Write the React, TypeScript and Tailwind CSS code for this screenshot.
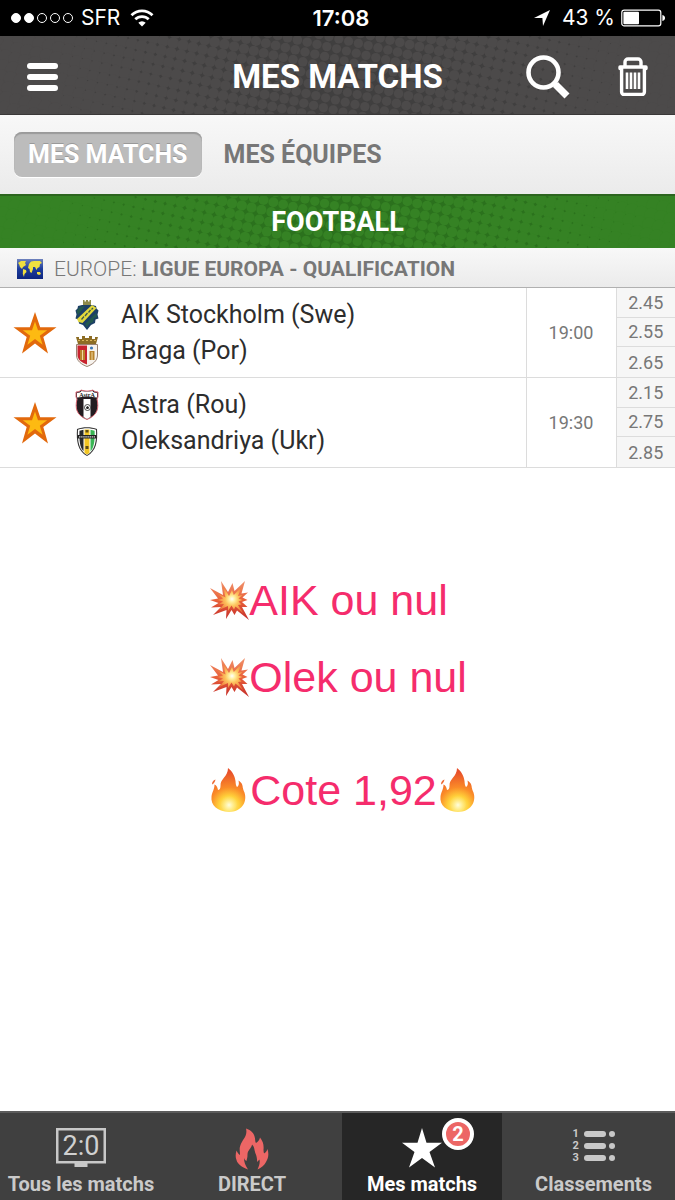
import React from 'react';

interface Team {
  name: string;
  crest: React.ReactNode;
}

interface Match {
  id: number;
  home: Team;
  away: Team;
  time: string;
  odds: string[];
}

// Dots shrink towards the middle so that the dark ground shows between them
const dots: { x: number; y: number; r: number }[] = [];
for (let row = -18; row < 30; row++) {
  for (let col = -4; col < 74; col++) {
    const x = col * 9.8 + row * -2.2;
    const y = row * 9.8 + col * 2.2;
    if (y < -6 || y > 86) continue;
    const edge = Math.min(1, Math.abs(x - 345) / 300);
    dots.push({ x, y, r: 4.6 + Math.pow(edge, 1.4) * 2.6 });
  }
}

const Halftone = ({ ground, dot }: { ground: string; dot: string }) => (
  <svg
    className="absolute inset-0 h-full w-full"
    viewBox="0 0 675 80"
    preserveAspectRatio="xMidYMid slice"
    aria-hidden="true"
  >
    <rect width="675" height="80" fill={ground} />
    {dots.map((d, i) => (
      <circle key={i} cx={d.x} cy={d.y} r={d.r} fill={dot} />
    ))}
  </svg>
);

const WifiIcon = () => (
  <svg className="h-[18px] w-6" viewBox="0 0 24 18" fill="none" stroke="#fff" strokeWidth="2.8">
    <path d="M1.5 6.2a15 15 0 0 1 21 0" />
    <path d="M5.3 10.3a9.6 9.6 0 0 1 13.4 0" />
    <path d="M12 17.5l-3.7-3.8a5.3 5.3 0 0 1 7.4 0z" fill="#fff" stroke="none" />
  </svg>
);

const LocationIcon = () => (
  <svg className="h-4 w-4" viewBox="0 0 16 16" fill="#fff">
    <path d="M16 0L9 16 8.4 8H0z" />
  </svg>
);

const BatteryIcon = () => (
  <svg className="h-[18px] w-11" viewBox="0 0 44 18">
    <rect x="0.8" y="1.2" width="39" height="15.6" rx="2.4" fill="none" stroke="#fff" strokeWidth="1.2" />
    <rect x="2.4" y="2.8" width="15.6" height="12.4" rx="1" fill="#fff" />
    <path d="M41.4 6c2 .6 2.6 1.6 2.6 3s-.6 2.4-2.6 3z" fill="#fff" />
  </svg>
);

const SearchIcon = () => (
  <svg className="h-11 w-11" viewBox="0 0 44 44" fill="none" stroke="#fff">
    <circle cx="17.5" cy="17.5" r="15" strokeWidth="4.6" />
    <path d="M27.5 28l3.5 3.5" strokeWidth="5" />
    <path d="M29.5 29.5l11.5 11.5" strokeWidth="7" />
  </svg>
);

const TrashIcon = () => (
  <svg className="h-10 w-[30px]" viewBox="0 0 30 40" fill="none" stroke="#fff">
    <path d="M7 9V5a3 3 0 0 1 3-3h10a3 3 0 0 1 3 3v4" strokeWidth="3.4" />
    <path d="M2 11.5V10h26v1.5" strokeWidth="3.4" strokeLinecap="round" strokeLinejoin="round" />
    <path d="M3.6 11v24a2.4 2.4 0 0 0 2.4 2.4h18a2.4 2.4 0 0 0 2.4-2.4V11" strokeWidth="3.4" />
    <path d="M9 15.5v16.500M13 15.5v16.500M17 15.5v16.500M21 15.5v16.500" strokeWidth="2.6" />
  </svg>
);

const WorldFlag = () => (
  <svg className="h-5 w-[26px]" viewBox="0 0 26 20">
    <defs>
      <linearGradient id="sea" x1="0" y1="0" x2="0" y2="1">
        <stop offset="0" stopColor="#6f83bd" />
        <stop offset="0.5" stopColor="#1c3c9c" />
        <stop offset="1" stopColor="#0c2580" />
      </linearGradient>
    </defs>
    <rect width="26" height="20" fill="url(#sea)" />
    <g fill="#f0e040">
      <path d="M1 4l3-2 5 0-1 2 1 2-3 2-1 2-2-2-1-3z" />
      <path d="M6 10l3 1 .5 2-2 2-.5 3-1.2-3z" />
      <path d="M12 5l2-2.500 3-.5 6 0 2 2-2 1-.5 3-2 1-1 2-1.500-3-2 0 0 2-1.500 4-1.500-1-.5-3-1.500-1z" />
      <path d="M20 13l3 0 1 2-2 1-2-1z" />
    </g>
  </svg>
);

const FavoriteStar = () => (
  <svg className="h-[42px] w-11" viewBox="0 0 44 42">
    <path d="M22 0l5.200 15.200H43.500L30.300 25.100 35 41.500 22 31.500 9 41.500l4.700-16.400L.5 15.200H16.800z" fill="#e2690c" />
    <path d="M22 9.500l3 8.700h9.200l-7.400 5.500 2.800 9L22 27l-7.600 5.700 2.800-9-7.400-5.500H19z" fill="#fdba12" />
  </svg>
);

const AikCrest = () => (
  <svg className="h-8 w-7" viewBox="0 0 28 32">
    <path d="M10 1h1.500v1.500h1.500V1h2v1.500h1.500V1H18v5h-8z" fill="#8d8a4a" />
    <path d="M5 7l4-1h10l4 1 .5 2.500 2 2-1 4 1 4-3 1-.5 3.500-4 2L14 31l-4-5-4-1.500-.5-4-3-1 1-4-1-4 2-2z" fill="#1c3f66" />
    <path d="M7 8l5-1-7 9-1.500-4zM23 14l1 4-3 1-1 4-4 2-2 3-2-3z" fill="#22584e" />
    <path d="M4 20L19 6l4.500 3L9.500 24l-4-1z" fill="#e3d83c" />
    <path d="M8.500 20.500l2.500-3M12 17l2.500-3M15.500 13.500l2-2.500M18.500 10.500l1.500-1.500" stroke="#3b5a4c" strokeWidth="1.300" />
  </svg>
);

const BragaCrest = () => (
  <svg className="h-8 w-7" viewBox="0 0 28 32">
    <path d="M3 2h3v2h3V1h3v2h4V1h3v3h3V2h3l-2 7H5z" fill="#8d6d24" />
    <path d="M5 5.500h18" stroke="#d9b45a" strokeWidth="1.200" strokeDasharray="2 2" />
    <path d="M3.500 9.500h21V20c0 6-5 9.500-10.500 11.500C8.500 29.500 3.500 26 3.500 20z" fill="#f7f3ee" stroke="#9a8372" />
    <path d="M4.500 10.500H14v19C9 27.500 4.500 25 4.500 20z" fill="#c8232e" />
    <path d="M7 15h5v10H7zM16.500 16h5v9h-5z" fill="#b8822b" />
    <path d="M9.500 15v10M19 17v8" stroke="#f1d9a0" />
    <circle cx="18.500" cy="13" r="1.600" fill="#3e78b5" />
  </svg>
);

const AstraCrest = () => (
  <svg className="h-8 w-7" viewBox="0 0 28 32">
    <path d="M3 3c3 0 4-1 5-2 4 1.500 8 1.500 12 0 1 1 2 2 5 2l0 5-1 2c2 9 1 16-10 20.500C3 26 2 19 4 10L3 8z" fill="#231c20" stroke="#dd6b77" />
    <path d="M4 4c2 0 4-1 4.500-2 3.500 1 7.500 1 11 0C20 3 22 4 24 4v4.500c-6-1-14-1-20 0z" fill="#fff" />
    <path d="M10.500 10h7v18l-3.500 2-3.500-2z" fill="#fff" />
    <text x="14" y="8" textAnchor="middle" fontSize="6" fontWeight="700" fontFamily="Liberation Serif, serif" fill="#222">
      AstrA
    </text>
    <circle cx="14.500" cy="18.500" r="3" fill="#fff" stroke="#222" strokeWidth="0.800" />
    <path d="M14.500 17l1.500 1.200-.6 1.800h-1.800l-.6-1.800z" fill="#222" />
  </svg>
);

const OleksandriyaCrest = () => (
  <svg className="h-8 w-7" viewBox="0 0 28 32">
    <path d="M4 4c6-2.500 14-2.500 20 0 .8 12-.5 22-10 27C4.500 26 3.200 16 4 4z" fill="#333" />
    <path d="M5 4.700c5.500-2 12.500-2 18 0 .6 11-.6 20.500-9 25.200C5.600 25.200 4.500 16 5 4.700z" fill="#fff" />
    <path d="M6.500 5.800l4-1v21.500C7 23 6 16 6.500 5.800z" fill="#27292b" />
    <path d="M11.500 4.500h5v23.500l-2.500 1.500-2.500-1.500z" fill="#f3c623" />
    <path d="M17.500 4.800l4.100 1c.4 10-.6 17-4.100 20.500z" fill="#39b655" />
    <path d="M4.500 10h19v3.500h-19z" fill="#222" />
    <path d="M6 11.800h16" stroke="#cfcfcf" strokeWidth="1.200" strokeDasharray="1.500 .6" />
    <path d="M12.500 5h3v2.500h-3zM12.500 21h3v3h-3z" fill="#5c4a16" />
  </svg>
);

const Collision = () => (
  <svg className="h-10 w-10 shrink-0" viewBox="0 0 40 40">
    <defs>
      <linearGradient id="boom" x1="0" y1="0" x2="0" y2="1">
        <stop offset="0" stopColor="#f0926c" />
        <stop offset="0.500" stopColor="#e8603a" />
        <stop offset="1" stopColor="#c42d2a" />
      </linearGradient>
      <radialGradient id="glow" gradientUnits="userSpaceOnUse" cx="23" cy="19" r="15">
        <stop offset="0" stopColor="#fff" />
        <stop offset="0.200" stopColor="#fff0a0" />
        <stop offset="0.450" stopColor="#fdc45e" />
        <stop offset="0.900" stopColor="#f08040" />
      </radialGradient>
    </defs>
    <path
      d="M12 1l7 11L23.500 3l2 8L36 1l-3.500 12.500L39 12.500l-5.500 5L38.500 20l-5.500 2 5.500 5-5.500 0L40 40 28 30.500l-2.500 4.500-3-5L17 39l.5-9L4 35l8-8-10 .5 7.500-4.500L1 20l8-1.500L1 8l13 7z"
      fill="url(#boom)"
    />
    <path
      d="M14 6l6 10L23 10l1.800 5L32.500 7l-3.500 9 4.500-1-4 3.500 4 1.500-4 1.500 3 3-3.500.5L34 33l-7.500-6.500-1.500 3-2.500-4L19 31l0-5L10 30l5-6-6 .5 5-3-6-1.500 6-1.500L7 12.500l9.500 5z"
      fill="url(#glow)"
    />
  </svg>
);

const Fire = () => (
  <svg className="h-11 w-10 shrink-0" viewBox="0 0 40 44">
    <defs>
      <radialGradient id="flame" gradientUnits="userSpaceOnUse" cx="20" cy="38" r="34">
        <stop offset="0" stopColor="#fff6a0" />
        <stop offset="0.300" stopColor="#ffd03a" />
        <stop offset="0.550" stopColor="#fa8b28" />
        <stop offset="1" stopColor="#e8502b" />
      </radialGradient>
      <radialGradient id="core" gradientUnits="userSpaceOnUse" cx="20" cy="37" r="10">
        <stop offset="0" stopColor="#fffde0" />
        <stop offset="1" stopColor="#ffe14a" stopOpacity="0" />
      </radialGradient>
    </defs>
    <path
      d="M19 0c4 3 7 8 7.500 13 .2 3 .5 5 1.500 6 1.500-.6 2.500-3 1.500-6.500 4 2.500 4 5 4.500 8 .3 2 1.500 3 2 6 1.500 8-3 17-16 17.500C8 43.500 1.500 37 2.500 28.500 3 24 5.500 21.500 5.500 16.500c2 .8 3 2.500 3.500 5.500 1.500 0 2.500-1.500 2.500-4C11 10.500 19 9 19 0z"
      fill="url(#flame)"
    />
    <path d="M3 16.500c0-2.500 1-4 3.500-5-.5 2.500-1.500 4-3.500 5z" fill="#ec6a34" />
    <circle cx="20" cy="36" r="8" fill="url(#core)" />
  </svg>
);

const ScoreboardIcon = () => (
  <svg className="h-10 w-[50px]" viewBox="0 0 50 40">
    <rect x="1.250" y="1.250" width="47.500" height="33" fill="none" stroke="#c8c8c8" strokeWidth="2.500" />
    <rect x="18.500" y="34" width="13" height="5" fill="#c8c8c8" />
    <text x="25" y="27" textAnchor="middle" fontSize="27" fontWeight="400" fontFamily="Roboto, sans-serif" fill="#d0d0d0">
      2:0
    </text>
  </svg>
);

const LiveIcon = () => (
  <svg className="h-[42px] w-[34px]" viewBox="0 0 34 42" fill="#ec6665">
    <path d="M11 .5c5 1.500 8.500 5 9 10 .2 2 .3 3.500 1 4.500 2-1 3.500-3 4-5.500 3 4 4 7.500 3.500 12 0 1.500.2 3 .5 4 1.500-.8 2.500-2 3.500-4.500 1.500 5 1 9-1.500 13-1.500 3-4.500 5.500-8.500 7.500 2-4 2.500-6.500 2-10l-2.500 2.500c.5-6-2-8.500-2.500-12-.2-2-.8-4-2.500-5.500-.5 4-4.500 5.500-4.500 10 0 3-.5 4-1 6.500-1-.5-2-1.500-2.500-3 0 4 1 7 4 11.500C6.500 39 2.500 36 1.500 32 .3 29 .5 26 1.500 22.500c1 2.500 2 3.500 3.500 4.500 0-4-1-6 .5-10C7 12 13 8 11 .5z" />
  </svg>
);

const StandingsIcon = () => (
  <span className="flex h-10 flex-col text-[11px] leading-3">
    {[1, 2, 3].map((n) => (
      <span key={n} className="flex items-center gap-[3px]">
        <span className="w-2">{n}</span>
        <span className="h-[6px] w-[22px] rounded-sm bg-[#c8c8c8]" />
        <span className="h-[6px] w-[6px] rounded-sm bg-[#c8c8c8]" />
      </span>
    ))}
  </span>
);

const MyMatchesIcon = () => (
  <svg className="h-10 w-10" viewBox="0 0 40 40" fill="#fff">
    <path d="M20 0l4.500 14.700H40L27.500 24 33 39.500 20 30 7 39.500 12.500 24 0 14.700h15.500z" />
  </svg>
);

const matches: Match[] = [
  {
    id: 1,
    home: { name: 'AIK Stockholm (Swe)', crest: <AikCrest /> },
    away: { name: 'Braga (Por)', crest: <BragaCrest /> },
    time: '19:00',
    odds: ['2.45', '2.55', '2.65'],
  },
  {
    id: 2,
    home: { name: 'Astra (Rou)', crest: <AstraCrest /> },
    away: { name: 'Oleksandriya (Ukr)', crest: <OleksandriyaCrest /> },
    time: '19:30',
    odds: ['2.15', '2.75', '2.85'],
  },
];

const StatusBar = () => (
  <div className="grid h-9 grid-cols-[1fr_auto_1fr] items-center bg-black pr-[10px] pl-[11px] text-[21px] leading-6 text-white font-[Inter,sans-serif]">
    <div className="flex items-center">
      <div className="flex gap-[3px]">
        {[true, true, false, false, false].map((on, i) => (
          <span key={i} className={`h-[10px] w-[10px] rounded-full border border-white ${on ? 'bg-white' : ''}`} />
        ))}
      </div>
      <span className="mr-[10px] ml-2">SFR</span>
      <WifiIcon />
    </div>
    <span className="pl-[6px] text-[22px] font-semibold">17:08</span>
    <div className="flex items-center justify-end">
      <LocationIcon />
      <span className="mr-[6px] ml-3">43 %</span>
      <BatteryIcon />
    </div>
  </div>
);

const MatchRow = ({ match }: { match: Match }) => (
  <tr className="border-b border-[#dcdcdc]">
    <td className="w-[73px] pl-[13px]">
      <button type="button" aria-label="Retirer de mes matchs" className="block">
        <FavoriteStar />
      </button>
    </td>
    <td className="text-[25px] leading-9 text-[#2d2d2d]">
      {[match.home, match.away].map((team) => (
        <div key={team.name} className="flex h-9 items-center gap-5">
          {team.crest}
          <span>{team.name}</span>
        </div>
      ))}
    </td>
    <td className="w-[90px] border-x border-[#dcdcdc] text-center text-[18px]">{match.time}</td>
    <td className="w-[59px] bg-[#f6f6f6] p-0 text-center text-[18px]">
      <div className="grid h-[89px] grid-rows-3 divide-y divide-[#dcdcdc]">
        {match.odds.map((odd) => (
          <span key={odd} className="flex items-center justify-center">
            {odd}
          </span>
        ))}
      </div>
    </td>
  </tr>
);

const tips = 'flex items-center text-[43px] leading-[48px]';
const navItem = 'flex flex-col items-center justify-between pt-[15px] pb-1';

const App = () => {
  return (
    <div className="flex min-h-screen flex-col bg-white text-[#777] font-[Roboto,sans-serif]">
      <StatusBar />

      <header className="relative h-[79px] border-b border-[#3a3838] bg-[#4c4a4a]">
        <Halftone ground="#403f3f" dot="#4c4a4a" />
        <div className="relative grid h-full grid-cols-[1fr_auto_1fr] items-center px-[27px] pt-[3px] text-white">
          <button type="button" aria-label="Menu" className="flex w-[31px] flex-col gap-[5px]">
            <span className="h-[6px] rounded-sm bg-white" />
            <span className="h-[6px] rounded-sm bg-white" />
            <span className="h-[6px] rounded-sm bg-white" />
          </button>
          <h1 className="text-[33px] leading-10 font-bold">MES MATCHS</h1>
          <div className="flex items-center justify-end gap-12">
            <button type="button" aria-label="Rechercher">
              <SearchIcon />
            </button>
            <button type="button" aria-label="Supprimer">
              <TrashIcon />
            </button>
          </div>
        </div>
      </header>

      <div className="flex h-[79px] items-center gap-[22px] bg-gradient-to-b from-[#f8f8f8] to-[#ebebeb] px-[14px] text-[25px] leading-8 font-bold">
        <button
          type="button"
          className="h-[45px] rounded-lg bg-[#bcbcbc] px-[14px] text-white shadow-[inset_0_2px_1px_#9a9a9a,0_1px_0_#fff] text-shadow-[0_-1px_0_#999]"
        >
          MES MATCHS
        </button>
        <button type="button">MES ÉQUIPES</button>
      </div>

      <div className="relative h-[54px] border-t-2 border-[#2c651f] bg-[#358224]">
        <Halftone ground="#2b711d" dot="#358224" />
        <h2 className="relative flex h-full items-center justify-center text-[27px] font-bold text-white">FOOTBALL</h2>
      </div>

      <div className="flex h-10 items-center gap-[11px] border-b border-[#b0b0b0] bg-gradient-to-b from-[#f8f8f8] to-[#ebebeb] pt-[2px] pl-[17px] text-[21px] leading-6">
        <WorldFlag />
        <h3 className="whitespace-nowrap">
          <span className="font-light">EUROPE: </span>
          <b>LIGUE EUROPA - QUALIFICATION</b>
        </h3>
      </div>

      <main className="flex-1">
        <table className="w-full border-collapse" aria-label="Mes matchs">
          <tbody>
            {matches.map((match) => (
              <MatchRow key={match.id} match={match} />
            ))}
          </tbody>
        </table>

        <div className="mx-auto mt-[108px] flex w-fit flex-col pl-3 whitespace-nowrap text-[#f52c6c] font-['Liberation_Sans',sans-serif]">
          <p className={tips}>
            <Collision />
            AIK ou nul
          </p>
          <p className={`mt-[29px] ${tips}`}>
            <Collision />
            Olek ou nul
          </p>
          <p className={`mt-[65px] gap-px ${tips}`}>
            <Fire />
            Cote 1,92
            <Fire />
          </p>
        </div>
      </main>

      <nav className="grid h-[89px] grid-cols-[162fr_180fr_160fr_173fr] border-t-2 border-[#5c5c5c] bg-[#404040] text-[20px] leading-6 font-bold text-[#cacaca]">
        <a href="#tous" className={navItem}>
          <ScoreboardIcon />
          Tous les matchs
        </a>
        <a href="#direct" className={navItem}>
          <LiveIcon />
          DIRECT
        </a>
        <a href="#mes-matchs" className={`relative bg-[#262626] text-white ${navItem}`}>
          <MyMatchesIcon />
          <span className="absolute top-[5px] left-[100px] flex h-8 w-8 items-center justify-center rounded-full border-4 border-white bg-[#ec6665]">
            2
          </span>
          Mes matchs
        </a>
        <a href="#classements" className={`pl-[10px] ${navItem}`}>
          <StandingsIcon />
          Classements
        </a>
      </nav>
    </div>
  );
};

export default App;
